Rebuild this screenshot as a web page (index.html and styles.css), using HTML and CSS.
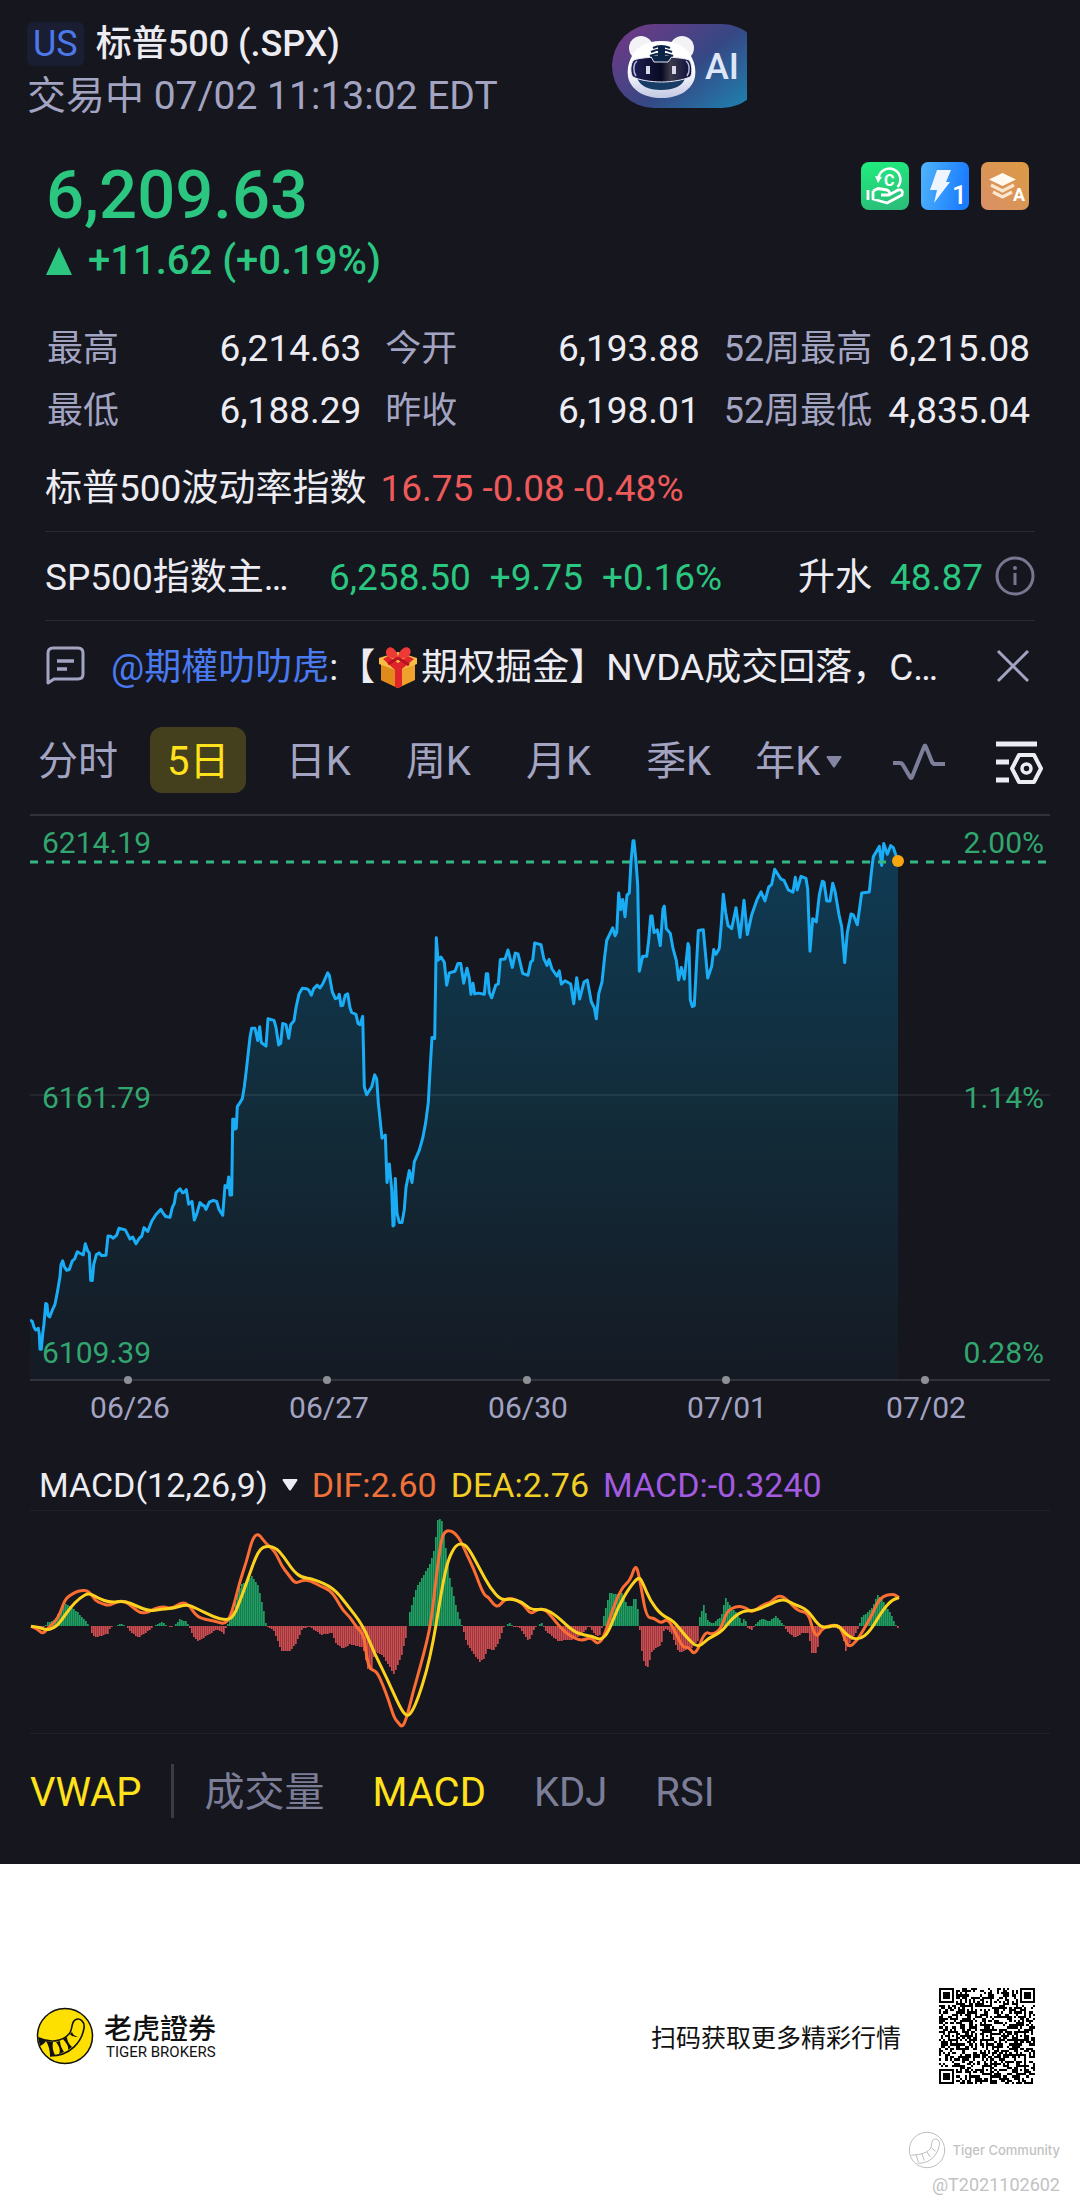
FILE: index.html
```html
<!DOCTYPE html>
<html lang="zh-CN">
<head>
<meta charset="utf-8">
<meta name="viewport" content="width=device-width, initial-scale=1">
<title>标普500 (.SPX)</title>
<link rel="stylesheet" href="styles.css">
</head>
<body>
<main class="quote-page">
  <header class="topbar">
    <div class="ticker">
      <h1 class="ticker-name"><span class="market">US</span>标普500 (.SPX)</h1>
      <p class="session">交易中 07/02 11:13:02 EDT</p>
    </div>
    <button class="ai-button" type="button" aria-label="AI">
      <svg class="ai-art" viewBox="0 0 152 84" aria-hidden="true">
        <defs>
          <linearGradient id="pill" x1="0" y1="0.2" x2="1" y2="0.9">
            <stop offset="0" stop-color="#6d3a86"/><stop offset=".5" stop-color="#354884"/><stop offset="1" stop-color="#1d86b4"/>
          </linearGradient>
          <linearGradient id="head" x1="0" y1="0" x2="0" y2="1">
            <stop offset=".5" stop-color="#fff"/><stop offset="1" stop-color="#c3c8e4"/>
          </linearGradient>
          <linearGradient id="visor" x1="0" y1="0" x2="1" y2="0">
            <stop offset="0" stop-color="#211e58"/><stop offset=".5" stop-color="#080a22"/><stop offset=".65" stop-color="#3b3b4c"/><stop offset="1" stop-color="#0d0d3c"/>
          </linearGradient>
        </defs>
        <rect width="152" height="84" rx="42" fill="url(#pill)"/>
        <circle cx="29" cy="24" r="12" fill="#f3f2f4"/>
        <circle cx="70" cy="24" r="12" fill="#f3f2f4"/>
        <path d="M49.500 17C66 17 76 24 80 34C83 40 84 46 83 53C80 66 67 74 49.500 74C32 74 19 66 16 53C15 46 16 40 19 34C23 24 33 17 49.500 17Z" fill="url(#head)"/>
        <path d="M25 54C31 59 68 59 73 54C71 62 62 66 49 66C36 66 28 62 25 54Z" fill="#173c66"/>
        <path d="M49.500 33C60 33 72 34 77 36C80 39 81 50 78 53C71 56 60 58 49.500 58C39 58 27 56 21 53C18 50 18 39 22 36C27 34 39 33 49.500 33Z" fill="url(#visor)" stroke="#e7e8f5" stroke-width="1"/>
        <path d="M25 37C21 40 21 48 24 52M74 37C78 40 78 48 75 52" fill="none" stroke="#b9b9dc" stroke-width="1.500"/>
        <path d="M38 31L42 38H56L61 31Z" fill="#0b2344" stroke="#e7e8f5" stroke-width="1"/>
        <path d="M46 22H53V33H46Z" fill="#0b2344"/>
        <path d="M41 24Q49 20 58 24M39 28Q49 23 60 28M38 32Q49 27 61 32" fill="none" stroke="#0b2344" stroke-width="2.200"/>
        <rect x="34" y="42" width="4" height="8" fill="#d7d7e8"/>
        <rect x="60" y="42" width="4" height="8" fill="#d7d7e8"/>
        <text x="93" y="55" class="ai-text">AI</text>
      </svg>
    </button>
  </header>

  <section class="price-block">
    <div>
      <p class="price">6,209.63</p>
      <p class="change"><svg width="26" height="28" viewBox="0 0 26 28" aria-hidden="true"><path d="M13 0L26 28H0Z" fill="currentColor"/></svg>+11.62 (+0.19%)</p>
    </div>
    <div class="badges">
      <svg viewBox="0 0 48 48" role="img" aria-label="融资">
        <defs><linearGradient id="bg1" x1=".4" y1="0" x2=".6" y2="1"><stop offset="0" stop-color="#20ea7d"/><stop offset="1" stop-color="#2bbd7a"/></linearGradient></defs>
        <rect width="48" height="48" rx="8" fill="url(#bg1)"/>
        <path d="M17.500 16A11 11 0 1 1 36.500 25" fill="none" stroke="#fff" stroke-width="2.500"/>
        <path d="M14 14L21 15L17 21Z" fill="#fff"/>
        <text x="23" y="24" class="badge-c">C</text>
        <path d="M7 28V38M12 29L17 26.500L26 28Q30 30 28 33H20M12 29V37L26 41L41 33Q43 27 37 28L28 33" fill="none" stroke="#fff" stroke-width="2.800" stroke-linejoin="round"/>
      </svg>
      <svg viewBox="0 0 48 48" role="img" aria-label="Level 1">
        <defs><linearGradient id="bg2" x1="0" y1=".1" x2="1" y2=".3"><stop offset="0" stop-color="#4fb3fb"/><stop offset="1" stop-color="#1a7cff"/></linearGradient></defs>
        <rect width="48" height="48" rx="7" fill="url(#bg2)"/>
        <path d="M16 8H30L25 20H29L13 41L16 28H9Z" fill="#eef5ff"/>
        <text x="31" y="42" class="badge-1">1</text>
      </svg>
      <svg viewBox="0 0 48 48" role="img" aria-label="深度行情">
        <defs><linearGradient id="bg3" x1="0" y1="1" x2="1" y2="0"><stop offset="0" stop-color="#d99068"/><stop offset="1" stop-color="#dc9a42"/></linearGradient></defs>
        <rect width="48" height="48" rx="7" fill="url(#bg3)"/>
        <path d="M21.500 11L35 17.500L21.500 24L8 17.500Z" fill="#fff9ef"/>
        <path d="M10 23L21.500 29L33 23M12 30L21.500 35L31 30" fill="none" stroke="#fbe7cf" stroke-width="3.200"/>
        <text x="32" y="39" class="badge-a">A</text>
      </svg>
    </div>
  </section>

  <dl class="stats">
    <div><dt>最高</dt><dd>6,214.63</dd></div>
    <div><dt>今开</dt><dd>6,193.88</dd></div>
    <div><dt>52周最高</dt><dd>6,215.08</dd></div>
    <div><dt>最低</dt><dd>6,188.29</dd></div>
    <div><dt>昨收</dt><dd>6,198.01</dd></div>
    <div><dt>52周最低</dt><dd>4,835.04</dd></div>
  </dl>

  <section class="info-rows">
    <div class="info-row vix"><span>标普500波动率指数</span><span class="down">16.75 -0.08 -0.48%</span></div>
    <div class="info-row future">
      <span class="future-name">SP500指数主…</span>
      <span class="up future-quote"><span>6,258.50</span><span>+9.75</span><span>+0.16%</span></span>
      <span class="premium">升水<span class="up">48.87</span></span>
      <button class="icon-button" type="button" aria-label="说明">
        <svg width="40" height="40" viewBox="0 0 40 40" aria-hidden="true"><circle cx="20" cy="20" r="18" fill="none" stroke="#77788f" stroke-width="3"/><circle cx="20" cy="12" r="2" fill="#77788f"/><path d="M20 17V29" stroke="#77788f" stroke-width="3"/></svg>
      </button>
    </div>
    <div class="info-row news">
      <svg width="40" height="40" viewBox="0 0 40 40" aria-hidden="true"><path d="M3 37V7Q3 2 8 2H33Q38 2 38 7V28Q38 33 33 33H9Z" fill="none" stroke="#a3a4c2" stroke-width="3" stroke-linejoin="round"/><path d="M12 15H29M12 23H22" stroke="#a3a4c2" stroke-width="3.500"/></svg>
      <p class="news-text"><a href="#author">@期權叻叻虎</a>:【<svg class="gift" viewBox="0 0 40 42" role="img" aria-label="礼物"><path d="M3 14L20 8L37 14V34L20 42L3 34Z" fill="#f0a02c"/><path d="M20 20V42L3 34V14Z" fill="#e08a1c"/><path d="M1 12L20 6L39 12V18L20 25L1 18Z" fill="#f9bd45"/><path d="M17 24V41L20 42L24 40V23L36 13L30 10L20 17L10 10L5 13Z" fill="#e0242b"/><path d="M20 13C12 13 5 9 9 3C13-2 19 4 20 11C21 4 28-2 32 3C35 9 28 13 20 13Z" fill="#ee3a36"/><path d="M20 12L10 18M20 12L31 19" stroke="#b81220" stroke-width="3"/></svg>期权掘金】NVDA成交回落，C…</p>
      <button class="icon-button" type="button" aria-label="关闭">
        <svg width="40" height="40" viewBox="0 0 40 40" aria-hidden="true"><path d="M5 5L35 35M35 5L5 35" stroke="#a3a4c2" stroke-width="3"/></svg>
      </button>
    </div>
  </section>

  <nav class="periods">
    <button type="button">分时</button>
    <button type="button" class="active">5日</button>
    <button type="button">日K</button>
    <button type="button">周K</button>
    <button type="button">月K</button>
    <button type="button">季K</button>
    <button type="button" class="with-caret">年K<svg width="16" height="12" viewBox="0 0 16 12" aria-hidden="true"><path d="M1 0H15Q16 1 15 2L9 11Q8 12 7 11L1 2Q0 1 1 0Z" fill="#8385a1"/></svg></button>
    <button type="button" aria-label="画线"><svg width="54" height="40" viewBox="0 0 54 40" aria-hidden="true"><path d="M1 21H8Q10 21 11 23L18 35Q19 37 20 35L32 5Q33 2 34 5L40 20Q41 22 43 22H53" fill="none" stroke="#7c7e9a" stroke-width="4"/></svg></button>
    <button type="button" aria-label="设置"><svg width="48" height="44" viewBox="0 0 48 44" aria-hidden="true"><path d="M1 4H42M1 22H14M1 40H14" stroke="#ececf2" stroke-width="5"/><path d="M24 15H39L46 28.500L39 42H24L17 28.500Z" fill="none" stroke="#ececf2" stroke-width="4" stroke-linejoin="round"/><circle cx="31.500" cy="28.500" r="4.500" fill="none" stroke="#ececf2" stroke-width="3.500"/></svg></button>
  </nav>

  <figure class="chart">
    <svg viewBox="0 0 1020 610" role="img" aria-label="5日走势">
      <defs>
        <linearGradient id="area" x1="0" y1="0" x2="0" y2="1">
          <stop offset="0" stop-color="#0f3b55"/><stop offset=".5" stop-color="#122c3a"/><stop offset="1" stop-color="#151a24"/>
        </linearGradient>
      </defs>
      <path id="price-area" fill="url(#area)"/>
      <path class="grid" d="M0 1H1020M0 566H1020"/>
      <path class="grid grid-mid" d="M0 281H1020"/>
      <polyline id="price-line"/>
      <path class="last-price" d="M0 48H1017"/>
      <circle cx="868" cy="47" r="6" fill="#f7a60f"/>
      <g class="tick-dots"><circle cx="98" cy="566" r="4"/><circle cx="297" cy="566" r="4"/><circle cx="497" cy="566" r="4"/><circle cx="696" cy="566" r="4"/><circle cx="895" cy="566" r="4"/></g>
      <g class="axis-value">
        <text x="12" y="39">6214.19</text><text x="12" y="294">6161.79</text><text x="12" y="549">6109.39</text>
      </g>
      <g class="axis-value axis-end">
        <text x="1014" y="39">2.00%</text><text x="1014" y="294">1.14%</text><text x="1014" y="549">0.28%</text>
      </g>
      <g class="axis-date">
        <text x="100" y="604">06/26</text><text x="299" y="604">06/27</text><text x="498" y="604">06/30</text><text x="697" y="604">07/01</text><text x="896" y="604">07/02</text>
      </g>
    </svg>
  </figure>

  <section class="indicator">
    <div class="legend">
      <button type="button">MACD(12,26,9)<svg width="16" height="12" viewBox="0 0 16 12" aria-hidden="true"><path d="M1 0H15Q16 1 15 2L9 11Q8 12 7 11L1 2Q0 1 1 0Z" fill="#ececf2"/></svg></button>
      <span class="dif">DIF:2.60</span><span class="dea">DEA:2.76</span><span class="macd">MACD:-0.3240</span>
    </div>
    <svg class="macd-chart" viewBox="0 0 1020 222" role="img" aria-label="MACD">
      <path id="bars-up" stroke="#1fa163" stroke-width="2"/>
      <path id="bars-down" stroke="#cf4d50" stroke-width="2"/>
      <path id="bar-gaps" stroke="#15161e" stroke-width="1" stroke-opacity=".3"/>
      <path id="dif-line"/>
      <path id="dea-line"/>
    </svg>
  </section>

  <nav class="indicator-tabs">
    <button type="button" class="on">VWAP</button>
    <span class="rule"></span>
    <button type="button">成交量</button>
    <button type="button" class="on">MACD</button>
    <button type="button">KDJ</button>
    <button type="button">RSI</button>
  </nav>
</main>

<footer class="share">
  <div class="brand">
    <svg width="58" height="58" viewBox="0 0 58 58" aria-hidden="true">
      <circle cx="29" cy="29" r="27.500" fill="#fee000" stroke="#111" stroke-width="1.500"/>
      <path d="M3 31C13 36 26 35 33 27C37 23 35 15 39 13C44 10 49 15 48 21C46 34 35 49 14 49" fill="none" stroke="#111" stroke-width="1.600"/>
      <path d="M2 30L10 34C8 37 6 38 4 39ZM10 34L17 35C16 40 17 44 19 48L14 49C14 44 13 39 10 34ZM20 35L24 34C24 38 26 42 28 45L23 47C25 43 23 39 20 35ZM27 32L31 30C31 34 33 37 36 40L32 43C33 39 30 36 27 32ZM34 27L36 25C37 28 39 29 42 30C39 30 36 30 34 27Z" fill="#111"/>
    </svg>
    <p class="brand-name">老虎證券<small>TIGER BROKERS</small></p>
  </div>
  <p class="scan">扫码获取更多精彩行情</p>
  <svg class="qr" viewBox="0 0 45 45" shape-rendering="crispEdges" role="img" aria-label="二维码"><path id="qr-modules" fill="#000"/></svg>
</footer>
<aside class="watermark">
  <p class="community"><svg width="38" height="38" viewBox="0 0 58 58" aria-hidden="true"><circle cx="29" cy="29" r="27" fill="none" stroke="#bcbcbc" stroke-width="1.500"/><path d="M5 37C13 36 27 36 34 27C37 23 35 15 39 13C44 10 49 15 48 21C46 34 35 51 14 49M12 36L16 47M21 35L25 45M29 32L34 40M36 26L42 31" fill="none" stroke="#bcbcbc" stroke-width="1.500"/></svg>Tiger Community</p>
  <p class="author">@T2021102602</p>
</aside>
<script src="chart.js"></script>
</body>
</html>
```
FILE: styles.css
```css
:root {
  --bg: #15161e;
  --text: #ececf2;
  --muted: #a3a4c2;
  --dim: #7c7e98;
  --up: #2bc680;
  --down: #ee5a5a;
  --yellow: #ffe11c;
  --line: #282932;
}
* { box-sizing: border-box; }
body {
  margin: 0;
  background: #fff;
  font-family: Roboto, "Noto Sans CJK SC", sans-serif;
}
h1, p, dl, dd, figure { margin: 0; }
button {
  padding: 0;
  border: 0;
  background: none;
  color: inherit;
  font: inherit;
  cursor: pointer;
}
svg { display: block; flex: none; }
a { color: #4a7af0; text-decoration: none; }

.quote-page {
  background: var(--bg);
  color: var(--text);
  font-size: 37px;
  line-height: 48px;
  padding-bottom: 46px;
}

.topbar { display: flex; padding: 18px 27px 0; }
.ticker { flex: 0 0 57%; padding-top: 2px; }
.ticker-name {
  display: flex;
  align-items: center;
  gap: 12px;
  font-size: 36px;
  font-weight: 500;
  line-height: 48px;
}
.market {
  padding: 0 6px;
  border-radius: 6px;
  background: #1a1e33;
  color: #4d78e8;
  font-weight: 400;
  line-height: 44px;
}
.session { margin-top: 4px; color: var(--muted); font-size: 39px; }
.ai-button { width: 135px; height: 84px; margin-top: 6px; overflow: hidden; }
.ai-art { width: 152px; height: 84px; }
.ai-text { fill: #dfe6f7; font-size: 36px; font-weight: 500; }

.price-block {
  display: flex;
  justify-content: space-between;
  padding: 36px 51px 0 46px;
  color: var(--up);
  font-weight: 500;
}
.price { padding-top: 3px; font-size: 67px; line-height: 72px; }
.change { display: flex; align-items: center; gap: 16px; margin-top: 6px; font-size: 40px; }
.badges { display: flex; gap: 12px; padding-top: 6px; }
.badges svg { width: 48px; height: 48px; }
.badges text { fill: #fff; font-weight: 700; }
.badge-c { font-size: 16px; }
.badges .badge-1 { font-size: 26px; font-weight: 500; }
.badge-a { font-size: 18px; }

.stats {
  display: grid;
  grid-template-columns: 1fr 1fr auto;
  gap: 14px 24px;
  margin: 40px 50px 0 47px;
}
.stats div { display: flex; justify-content: space-between; gap: 16px; }
.stats dt { color: var(--muted); font-size: 36px; }

.info-rows { margin: 8px 45px 0; }
.info-row { display: flex; align-items: center; height: 89px; border-bottom: 1px solid var(--line); }
.info-row > span, .info-row > p { padding-top: 4px; }
.news { border-bottom: 0; }
.vix { gap: 14px; }
.up { color: var(--up); }
.down { color: var(--down); }
.future-name { flex: 0 0 284px; }
.future-quote { display: flex; gap: 19px; flex: 1; }
.premium { display: flex; gap: 18px; margin-right: 12px; }
.news-text { flex: 1; padding-left: 26px; white-space: nowrap; }
.gift { display: inline-block; width: 40px; height: 42px; margin: 0 3px; vertical-align: -8px; }
.news .icon-button { margin-right: 2px; }

.periods {
  display: grid;
  grid-template-columns: repeat(8, 1fr) 80px;
  justify-items: center;
  align-items: center;
  margin: 17px 21px 0 18px;
  color: var(--muted);
  font-size: 40px;
}
.periods button { padding: 4px 17px 0; line-height: 62px; }
.periods .active { border-radius: 12px; background: #443f1d; color: var(--yellow); }
.periods .with-caret { display: flex; align-items: center; gap: 6px; padding: 4px 0 0; }

.chart { margin: 21px 30px 0; }
.chart svg, .macd-chart { width: 100%; height: auto; }
.grid { stroke: rgba(255, 255, 255, .12); stroke-width: 2; }
.grid-mid { stroke: rgba(255, 255, 255, .07); }
#price-line { fill: none; stroke: #1aadf5; stroke-width: 3; stroke-linejoin: round; }
.last-price { stroke: #35b683; stroke-width: 3; stroke-dasharray: 8 8; }
.tick-dots { fill: #8f9096; }
.axis-value { fill: #32a66f; font-size: 30px; }
.axis-end { text-anchor: end; }
.axis-date { fill: var(--muted); font-size: 30px; text-anchor: middle; }

.indicator { margin: 34px 30px 0; border-bottom: 1px solid #20212a; }
.legend {
  display: flex;
  align-items: center;
  gap: 14px;
  padding: 3px 9px 1px;
  border-bottom: 1px solid #20212a;
  font-size: 34px;
  line-height: 48px;
}
.legend button { display: flex; align-items: center; gap: 14px; }
.dif { color: #f0713a; }
.dea { color: #f2cf25; }
.macd { color: #a35be0; }
#dif-line { fill: none; stroke: #fb6d33; stroke-width: 3; }
#dea-line { fill: none; stroke: #fdd21f; stroke-width: 3; }

.indicator-tabs {
  display: flex;
  align-items: center;
  gap: 48px;
  margin: 30px 30px 0;
  color: var(--dim);
  font-size: 40px;
  line-height: 50px;
}
.indicator-tabs button { padding-top: 4px; }
.indicator-tabs .on { color: var(--yellow); }
.rule { width: 3px; height: 54px; margin: 0 -18px; background: #3a3b43; }

.share { display: flex; align-items: center; padding: 124px 45px 0 36px; color: #111; }
.brand { display: flex; align-items: center; gap: 10px; flex: 1; }
.brand-name { font: 500 28px/32px "Noto Sans CJK TC", sans-serif; }
.brand-name small { display: block; padding-left: 2px; font: 400 15px/18px Roboto, sans-serif; }
.scan { margin-right: 38px; font-size: 25px; }
.qr { width: 96px; height: 96px; }

.watermark { padding: 46px 20px 10px; color: #c2c2c2; }
.watermark p { display: flex; align-items: center; justify-content: flex-end; }
.community { gap: 6px; font: 500 13px/40px Inter, sans-serif; }
.author { font-size: 18px; line-height: 30px; }
```
FILE: chart.js
```js
// Samples are flat "x,y" lists on the recording grid; toChart maps them to SVG units.
const parse = (s) => s.trim().split(/\s+/).map((p) => p.split(",").map(Number));
const byId = (id) => document.getElementById(id);

const price = parse(`90,1290 97,1293 102,1308 107,1315 115,1311 118,1325 120,1364 124,1364 128,1325 132,1300 137,1248 141,1250 144,1278 149,1282 157,1265 165,1250 173,1215 180,1180 183,1150 188,1140 193,1155 200,1164 208,1162 217,1140 224,1135 232,1117 242,1122 250,1125 256,1097 263,1115 268,1120 272,1190 277,1190 281,1150 289,1125 297,1120 305,1127 318,1126 324,1077 332,1078 340,1083 350,1075 357,1058 376,1062 384,1075 390,1085 398,1080 408,1097 418,1083 425,1078 432,1056 443,1066 455,1040 468,1023 482,1010 490,1020 497,1028 510,1030 517,1005 523,995 528,968 540,958 548,968 553,966 559,960 566,997 576,990 583,1037 590,1022 600,993 608,1000 612,1000 618,1010 628,992 640,987 650,990 657,1010 668,1025 675,950 682,955 686,928 690,974 695,974 698,782 702,782 705,807 709,805 712,750 720,740 727,730 733,700 738,665 744,620 750,575 755,552 765,552 773,583 779,548 784,588 790,592 798,597 804,528 822,532 828,550 836,594 842,590 848,540 858,543 866,577 872,543 882,533 888,500 897,465 907,451 920,452 927,456 934,468 941,452 952,443 960,450 968,440 983,412 988,418 997,460 1006,477 1014,475 1018,466 1023,495 1028,494 1036,468 1043,465 1050,500 1055,512 1068,517 1074,540 1080,543 1088,522 1093,700 1100,720 1115,700 1124,670 1130,680 1135,740 1146,830 1156,822 1161,942 1168,895 1175,960 1179,1052 1182,1050 1186,932 1191,1020 1198,1043 1206,1043 1213,1010 1218,955 1228,912 1236,942 1243,890 1258,860 1268,830 1277,790 1285,740 1290,660 1296,575 1304,578 1309,323 1314,380 1323,372 1333,385 1340,443 1348,412 1365,408 1374,388 1382,388 1391,438 1401,400 1408,425 1413,466 1419,438 1424,465 1435,463 1453,466 1459,414 1463,414 1468,462 1475,475 1487,443 1495,440 1501,378 1515,377 1524,354 1537,398 1546,362 1554,364 1568,413 1584,418 1592,385 1598,380 1604,336 1623,341 1631,375 1641,393 1647,378 1656,402 1671,420 1678,407 1684,440 1695,432 1712,440 1721,490 1730,424 1739,478 1752,435 1762,430 1774,485 1783,500 1789,528 1796,465 1806,435 1814,370 1820,330 1838,298 1845,318 1850,310 1856,210 1862,252 1868,226 1875,270 1881,215 1888,210 1893,130 1899,78 1902,78 1908,130 1913,190 1916,320 1918,408 1928,370 1940,370 1946,330 1952,268 1956,268 1962,310 1972,303 1981,343 1989,250 1993,243 1999,300 2011,312 2019,350 2029,380 2036,430 2044,398 2053,428 2064,338 2067,345 2071,480 2077,497 2083,495 2095,305 2110,303 2123,425 2135,395 2141,353 2148,365 2158,350 2164,290 2170,213 2177,260 2184,292 2195,300 2208,247 2220,322 2232,228 2242,315 2255,265 2272,225 2283,207 2295,230 2306,195 2315,188 2324,150 2343,175 2352,178 2365,202 2379,208 2386,170 2392,202 2403,168 2418,173 2423,200 2430,357 2438,275 2449,283 2458,215 2467,180 2472,182 2480,230 2490,230 2498,185 2505,205 2517,265 2525,295 2534,386 2542,310 2553,263 2560,265 2572,290 2585,210 2608,207 2615,150 2620,118 2638,92 2645,140 2651,85 2662,112 2672,90 2680,95 2694,130`)
  .map(([x, y]) => [x / 3 - 30, y / 2.529 - 4]);
const line = price.map(([x, y]) => x.toFixed(1) + "," + y.toFixed(1)).join(" ");
byId("price-line").setAttribute("points", line);
byId("price-area").setAttribute("d", `M0 566L${line}V566Z`);

const toChart = ([x, y]) => [x / 3 - 30, y / 3 - 60];
const dif = parse(`93,526 110,532 128,550 145,530 165,512 180,488 195,445 215,430 240,417 267,420 285,448 305,458 328,464 350,452 375,450 400,470 420,486 445,484 460,474 490,466 515,474 545,453 565,460 590,496 615,505 645,510 673,520 690,500 705,450 720,390 740,330 755,270 768,250 780,253 795,275 825,300 845,345 865,370 885,398 905,388 930,388 960,405 990,417 1010,445 1030,480 1050,498 1070,530 1092,552 1100,620 1110,655 1130,660 1150,705 1165,745 1182,800 1195,815 1207,830 1220,800 1240,720 1260,650 1280,575 1295,500 1305,410 1315,330 1325,260 1338,238 1355,240 1370,252 1385,275 1400,310 1420,350 1440,405 1455,435 1465,438 1480,460 1495,468 1511,448 1530,440 1555,450 1575,465 1592,490 1612,475 1635,475 1658,500 1681,530 1710,555 1744,570 1773,558 1794,582 1813,555 1836,480 1865,410 1890,390 1908,336 1920,390 1939,500 1962,500 1982,518 2003,502 2025,540 2048,590 2066,588 2086,615 2115,540 2135,552 2163,535 2180,480 2211,465 2238,470 2257,485 2290,460 2312,455 2335,432 2358,442 2393,480 2425,485 2439,540 2453,558 2467,530 2508,520 2525,535 2544,592 2571,570 2594,530 2617,490 2640,438 2680,428 2697,440`).map(toChart);
const dea = parse(`93,526 115,528 138,537 160,532 180,515 210,470 240,440 267,425 295,442 330,455 375,450 410,465 445,480 485,475 520,472 560,460 590,472 640,498 680,508 700,497 720,450 745,380 770,310 790,285 825,288 850,315 880,360 905,380 940,384 1000,410 1040,460 1090,525 1120,600 1160,680 1200,770 1220,797 1235,785 1255,740 1280,660 1300,570 1315,480 1330,390 1345,325 1365,285 1385,276 1405,290 1440,355 1470,410 1503,448 1532,443 1566,452 1595,478 1635,473 1670,495 1721,542 1756,553 1775,555 1802,568 1825,545 1853,470 1888,410 1917,376 1928,395 1951,450 1985,493 2020,508 2060,560 2095,592 2123,562 2163,545 2198,500 2232,478 2261,480 2307,462 2347,442 2382,460 2422,475 2456,525 2479,530 2514,520 2542,555 2577,568 2611,540 2646,480 2674,448 2697,440`).map(toChart);

// Quadratic segments through the midpoints keep the averages smooth.
function smooth(pts) {
  let d = `M${pts[0]}`;
  for (let i = 1; i < pts.length - 1; i++) {
    const [x, y] = pts[i], [nx, ny] = pts[i + 1];
    d += `Q${x.toFixed(1)} ${y.toFixed(1)} ${((x + nx) / 2).toFixed(1)} ${((y + ny) / 2).toFixed(1)}`;
  }
  return d + `L${pts[pts.length - 1]}`;
}
byId("dif-line").setAttribute("d", smooth(dif));
byId("dea-line").setAttribute("d", smooth(dea));

const hist = parse(`93,526 120,531 135,526 142,515 165,505 185,470 200,458 230,480 255,508 272,526 276,545 285,560 325,548 332,528 345,526 362,518 380,526 395,545 415,560 440,545 460,526 487,512 505,526 515,530 525,524 540,505 560,512 568,526 580,555 595,570 625,552 650,535 672,548 680,526 700,490 715,420 728,395 735,395 757,375 775,405 790,470 800,526 820,535 845,600 870,600 890,575 908,532 930,528 965,552 995,545 1010,580 1030,592 1050,580 1090,590 1105,660 1115,655 1125,600 1150,615 1182,670 1205,615 1218,560 1224,526 1228,490 1250,410 1290,340 1305,290 1312,212 1318,200 1326,210 1336,275 1350,380 1365,450 1383,515 1388,526 1400,575 1425,615 1440,632 1454,622 1465,590 1480,600 1497,575 1511,530 1530,515 1543,528 1560,530 1587,570 1606,530 1626,516 1637,540 1675,570 1727,565 1756,540 1767,524 1782,545 1798,560 1807,526 1813,490 1830,425 1853,430 1870,425 1882,465 1897,465 1905,430 1913,465 1919,526 1928,620 1942,655 1957,600 1985,580 1994,530 2014,545 2037,605 2077,590 2094,570 2099,500 2112,462 2125,512 2140,518 2165,495 2177,440 2192,465 2215,490 2226,515 2235,500 2243,530 2255,538 2266,520 2287,502 2307,512 2330,495 2352,522 2362,540 2383,560 2410,545 2427,545 2434,605 2452,605 2461,535 2479,526 2525,535 2538,600 2551,575 2574,535 2585,500 2617,470 2634,432 2651,450 2668,480 2685,515 2691,528 2699,538`).map(toChart);
const zero = 115;
let up = "", down = "", gaps = "";
for (let x = 2, i = 0; x <= 869; x += 2) {
  while (i < hist.length - 2 && hist[i + 1][0] < x) i++;
  const [x0, y0] = hist[i], [x1, y1] = hist[i + 1];
  const y = Math.round(y0 + (y1 - y0) * Math.max(0, Math.min(1, (x - x0) / (x1 - x0))));
  const bar = `M${x} ${zero}V${y}`;
  if (y < zero) up += bar; else if (y > zero) down += bar;
  gaps += `M${x + 0.5} ${zero}V${y}`;
}
byId("bars-up").setAttribute("d", up);
byId("bars-down").setAttribute("d", down);
byId("bar-gaps").setAttribute("d", gaps);

// 45-module code: finder and alignment squares over a seeded fill.
const size = 45;
const finders = [[3, 3], [41, 3], [3, 41]];
const aligns = [[22, 6], [6, 22], [22, 22], [38, 22], [22, 38], [38, 38]];
let seed = 20210;
let modules = "";
for (let y = 0; y < size; y++) {
  for (let x = 0; x < size; x++) {
    seed = (seed * 1103515245 + 12345) % 2147483648;
    let on = (seed >> 16) % 100 < 52;
    if (x === 6 || y === 6) on = (x + y) % 2 === 0;
    const ring = ([cx, cy]) => Math.max(Math.abs(x - cx), Math.abs(y - cy));
    aligns.forEach((c) => { const r = ring(c); if (r <= 2) on = r !== 1; });
    finders.forEach((c) => { const r = ring(c); if (r <= 4) on = r !== 2 && r !== 4; });
    if (on) modules += `M${x} ${y}h1v1h-1z`;
  }
}
byId("qr-modules").setAttribute("d", modules);
```
